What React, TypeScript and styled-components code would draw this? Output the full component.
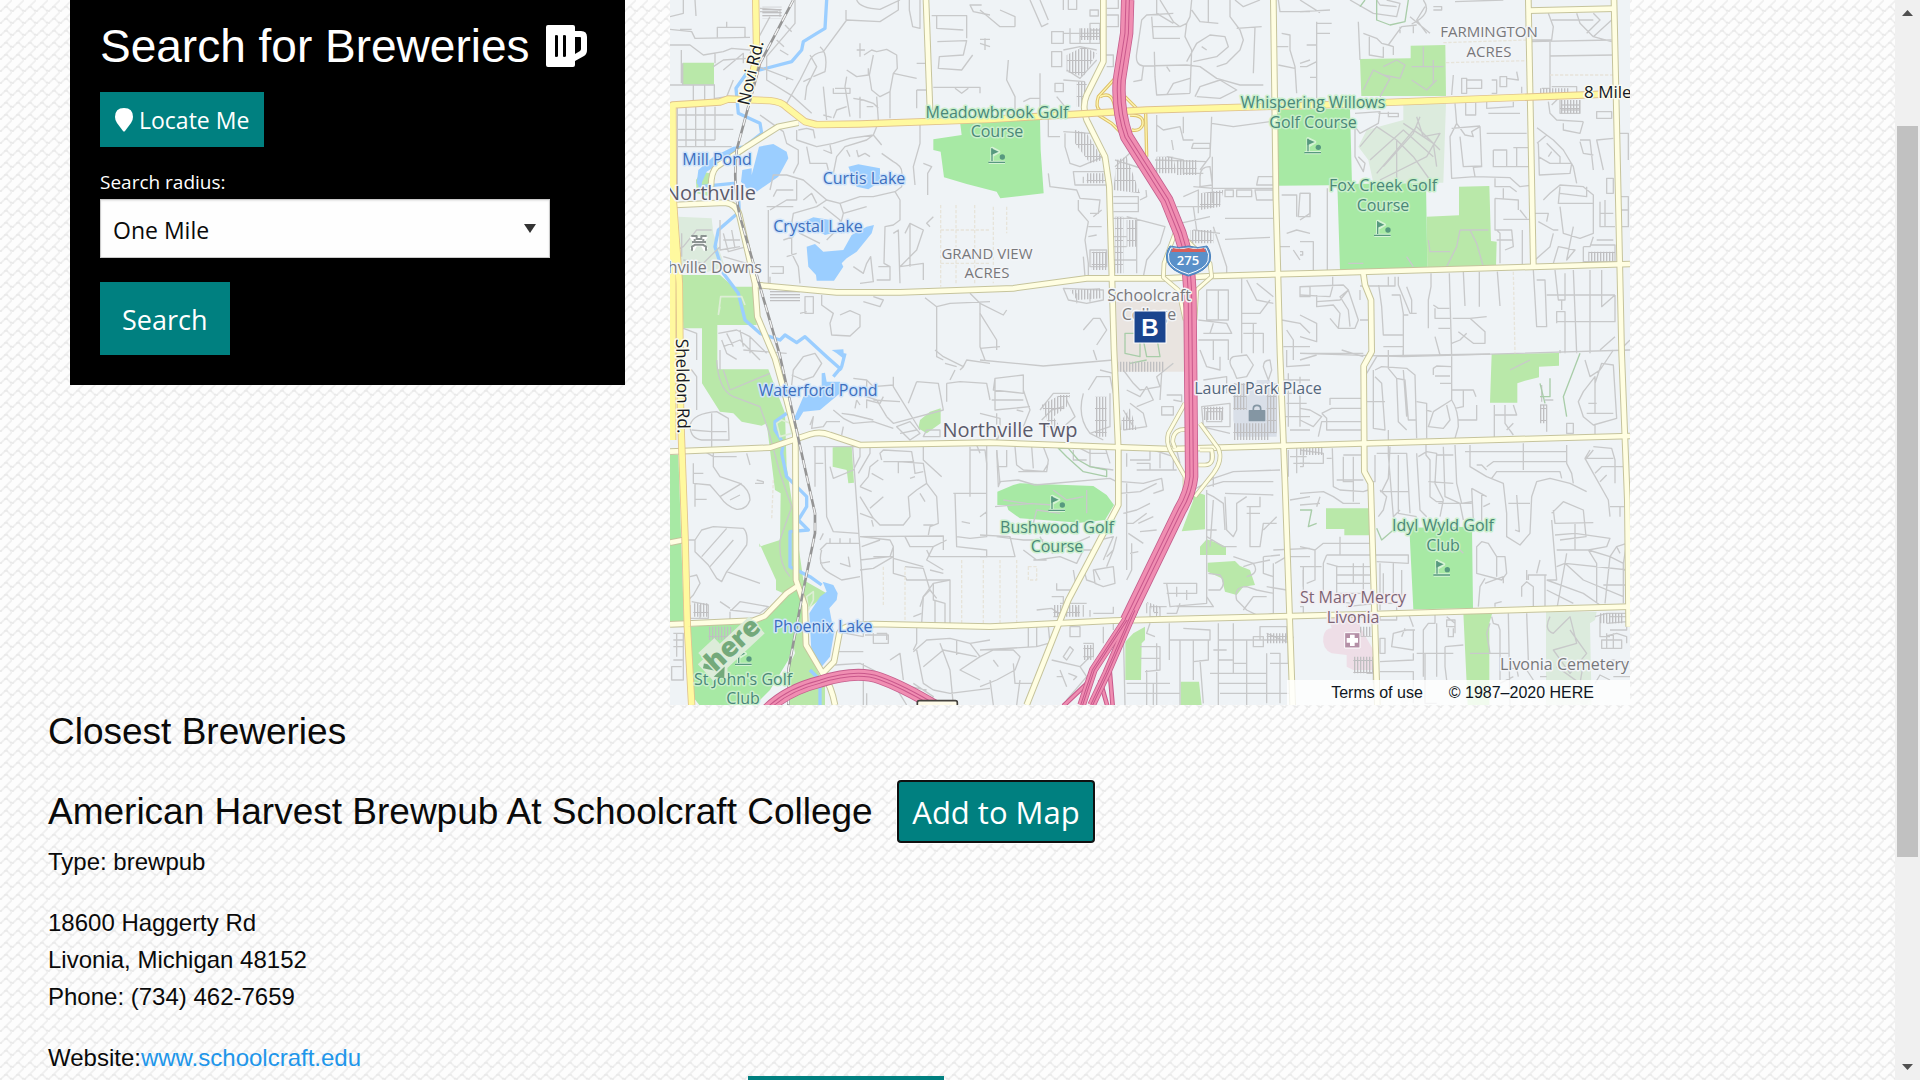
import React from "react";
import styled, { createGlobalStyle, css } from "styled-components";

const weave =
  "url(\"data:image/svg+xml,%3Csvg xmlns='http://www.w3.org/2000/svg' width='12' height='12'%3E%3Crect width='12' height='12' fill='%23fdfdfd'/%3E%3Cpath d='M0 12L12 0M6 6l6 6' stroke='%23efefef' stroke-width='1.6' fill='none'/%3E%3Cpath d='M4 7h4M10 11l2-1M0 11h2' stroke='%23e6e6e6' fill='none'/%3E%3C/svg%3E\")";

const arial = '"Liberation Sans", Arial, sans-serif';
const humanist = '"Open Sans", "Noto Sans", sans-serif';

const GlobalStyle = createGlobalStyle`
  *, *::before, *::after { box-sizing: border-box; }
  body {
    margin: 0;
    background: #fdfdfd ${weave};
    color: #0a0a0a;
    font: 24px/37px ${arial};
    overflow: hidden;
  }
`;

const Shell = styled.div`
  display: grid;
  grid-template-columns: minmax(0, 1fr) 25px;
  height: 100vh;
`;

const Page = styled.main`
  height: 100vh;
  overflow: hidden;
`;

const Top = styled.section`
  display: grid;
  grid-template-columns: 555fr 960fr 220fr;
  gap: 45px;
  align-items: start;
  padding-left: 70px;
`;

const Panel = styled.form`
  display: flex;
  flex-direction: column;
  align-items: flex-start;
  padding: 17px 30px 30px;
  background: #000;
  color: #fff;
`;

const PanelTitle = styled.h1`
  display: flex;
  align-items: center;
  gap: 16px;
  margin: 0 0 17px;
  font-size: 46px;
  line-height: 58px;
  font-weight: 400;
  white-space: nowrap;
`;

const MugSvg = styled.svg`
  flex: none;
  width: 41px;
  height: 42px;
`;

const PinSvg = styled.svg`
  flex: none;
  width: 18px;
  height: 24px;
`;

const Button = styled.button<{ $size: "small" | "medium" | "large"; $focused?: boolean }>`
  display: inline-flex;
  align-items: center;
  justify-content: center;
  gap: 6px;
  flex: none;
  border: 0;
  background: #008080;
  color: #fff;
  font-family: ${humanist};
  white-space: nowrap;
  ${({ $size }) =>
    $size === "small"
      ? css`font-size: 23px; height: 55px; padding: 0 15px;`
      : $size === "medium"
      ? css`font-size: 27px; height: 73px; padding: 2px 22px 0;`
      : css`font-size: 31px; height: 61px; width: 196px; padding: 0;`}
  ${({ $focused }) =>
    $focused &&
    css`
      border: 1px solid #101010;
      border-radius: 3px;
      box-shadow: 0 0 0 1px #101010, 0 0 0 2px #fff;
    `}
`;

const Label = styled.label`
  margin-top: 18px;
  font: 19px/34px ${humanist};
`;

const Select = styled.select`
  appearance: none;
  width: 450px;
  max-width: 100%;
  height: 59px;
  margin-bottom: 24px;
  padding: 2px 12px 0;
  border: 1px solid #cacaca;
  border-radius: 0;
  box-shadow: inset 0 1px 2px rgba(10, 10, 10, 0.1);
  background: #fefefe
    url("data:image/svg+xml,%3Csvg xmlns='http://www.w3.org/2000/svg' width='12' height='9'%3E%3Cpath d='M0 0h12L6 9z' fill='%23333'/%3E%3C/svg%3E")
    no-repeat right 13px center;
  color: #0a0a0a;
  font: 23px ${humanist};
`;

const MapBox = styled.div`
  position: relative;
  overflow: hidden;
  background: #eff3f6;
  aspect-ratio: 960 / 705;
`;

const MapDrawing = styled.svg`
  display: block;
  width: 100%;
  height: 100%;
`;

const MapText = styled.text<{ $anchor: "start" | "middle" | "end" }>`
  font-family: ${humanist};
  text-anchor: ${(p) => p.$anchor};
  paint-order: stroke;
  stroke-width: 3px;
  stroke-linejoin: round;
`;

const Credits = styled.div`
  position: absolute;
  right: 0;
  bottom: 0;
  display: flex;
  gap: 26px;
  padding: 0 36px 0 44px;
  background: rgba(255, 255, 255, 0.8);
  color: #0f1621;
  font-size: 16px;
  line-height: 25px;
`;

const CreditLink = styled.a`
  color: inherit;
  text-decoration: none;
`;

const Results = styled.section`
  padding: 0 48px;
`;

const ResultsTitle = styled.h2`
  margin: 0 0 22px;
  font-size: 37px;
  line-height: 54px;
  font-weight: 400;
`;

const BreweryHead = styled.div`
  display: flex;
  align-items: flex-start;
  gap: 16px;
  min-height: 62px;
`;

const BreweryName = styled.h3<{ $width: number }>`
  flex: 0 0 ${(p) => p.$width}px;
  margin: 0;
  font-size: 37px;
  line-height: 61px;
  font-weight: 400;
  white-space: nowrap;
`;

const Line = styled.p`
  margin: 0;
`;

const Address = styled.address`
  margin: 24px 0;
  font-style: normal;
`;

const SiteLink = styled.a`
  color: #2196ea;
  text-decoration: none;
`;

const Scrollbar = styled.div`
  display: flex;
  flex-direction: column;
  height: 100vh;
  background: #f0f0f0;
`;

const Arrow = styled.svg`
  display: block;
  flex: none;
  width: 25px;
  height: 25px;
`;

const Gap = styled.div<{ $grow: number }>`
  flex: ${(p) => p.$grow} 0 0;
`;

const Thumb = styled.div`
  flex: 731 0 0;
  margin: 0 2px;
  background: #c1c1c1;
`;

type Tone = "golf" | "water" | "town" | "area" | "road" | "mall" | "hospital";
const tones: Record<Tone, [string, string]> = {
  golf: ["#4a8778", "#c9efcb"],
  water: ["#3d6fbe", "#cfe4fa"],
  town: ["#5b5b6b", "#f3f5f8"],
  area: ["#78787b", "#f3f5f8"],
  road: ["#16191f", "#fbfbee"],
  mall: ["#54677c", "#f3f5f8"],
  hospital: ["#7d6474", "#f3eef2"],
};

interface MapLabel {
  t: string;
  x: number;
  y: number;
  tone: Tone;
  size?: number;
  anchor?: "start" | "middle" | "end";
  turn?: number;
}

const labels: MapLabel[] = [
  { t: "FARMINGTON", x: 819, y: 37, tone: "area", size: 15 },
  { t: "ACRES", x: 819, y: 57, tone: "area", size: 15 },
  { t: "8 Mile", x: 914, y: 98, tone: "road", size: 17, anchor: "start" },
  { t: "Meadowbrook Golf", x: 327, y: 118, tone: "golf" },
  { t: "Course", x: 327, y: 137, tone: "golf" },
  { t: "Whispering Willows", x: 643, y: 108, tone: "golf" },
  { t: "Golf Course", x: 643, y: 128, tone: "golf" },
  { t: "Fox Creek Golf", x: 713, y: 191, tone: "golf" },
  { t: "Course", x: 713, y: 211, tone: "golf" },
  { t: "Mill Pond", x: 47, y: 165, tone: "water" },
  { t: "Curtis Lake", x: 194, y: 184, tone: "water" },
  { t: "Crystal Lake", x: 148, y: 232, tone: "water" },
  { t: "Northville", x: 86, y: 200, tone: "town", size: 20, anchor: "end" },
  { t: "hville Downs", x: 92, y: 273, tone: "area", anchor: "end" },
  { t: "GRAND VIEW", x: 317, y: 259, tone: "area", size: 15 },
  { t: "ACRES", x: 317, y: 278, tone: "area", size: 15 },
  { t: "Schoolcraft", x: 479, y: 301, tone: "area" },
  { t: "College", x: 479, y: 320, tone: "area" },
  { t: "Laurel Park Place", x: 588, y: 394, tone: "mall" },
  { t: "Waterford Pond", x: 148, y: 396, tone: "water" },
  { t: "Northville Twp", x: 340, y: 437, tone: "town", size: 20 },
  { t: "Bushwood Golf", x: 387, y: 533, tone: "golf" },
  { t: "Course", x: 387, y: 552, tone: "golf" },
  { t: "Idyl Wyld Golf", x: 773, y: 531, tone: "golf" },
  { t: "Club", x: 773, y: 551, tone: "golf" },
  { t: "St Mary Mercy", x: 683, y: 603, tone: "hospital" },
  { t: "Livonia", x: 683, y: 623, tone: "hospital" },
  { t: "Livonia Cemetery", x: 959, y: 670, tone: "area", anchor: "end" },
  { t: "Phoenix Lake", x: 153, y: 632, tone: "water" },
  { t: "St John's Golf", x: 73, y: 685, tone: "golf" },
  { t: "Club", x: 73, y: 704, tone: "golf" },
  { t: "Sheldon Rd.", x: 6, y: 339, tone: "road", size: 17, anchor: "start", turn: 89 },
  { t: "Novi Rd.", x: 79, y: 106, tone: "road", size: 17, anchor: "start", turn: -77 },
];

/* Street and area outlines are kept in map units, three to a pixel. */
const yellowRoads = [
  "M8 1320V315L150 306L175 297L300 302Q335 305 350 322L405 365L440 374L570 372L960 358L1430 330L1920 316L2740 285L2880 279",
  "M8 315L10 600L28 850L32 1250L45 1610L52 1880L65 2115",
  "M257 0L260 170L228 300",
];

const creamRoads = [
  "M385 368L325 380L230 440L140 500Q123 515 123 560",
  "M15 615L165 608Q198 612 208 645L255 850L262 950L315 1075L350 1200L376 1300L378 1740L404 1815L408 1935L458 2020Q485 2060 495 2115",
  "M260 855L500 877L690 877L1030 865L1250 835L1490 835L1630 828L1920 820L2880 792",
  "M768 0L780 330",
  "M1300 0V185L1250 285Q1235 320 1250 360L1305 470L1318 560L1332 1050L1345 1350V1515L1195 1800L1070 2115",
  "M1810 0L1818 600L1830 1060L1845 1450L1868 2115",
  "M2575 0L2590 800",
  "M2832 0L2855 1060L2872 1500L2876 1880",
  "M2575 32L2832 26",
  "M2080 820L2085 855L2103 900L2105 1055L2081 1098L2083 1415L2102 1450L2122 2115",
  "M0 1355L300 1343L420 1303Q450 1293 480 1305L570 1335L960 1328L1500 1347L1920 1335L2880 1308",
  "M0 1873L250 1862L285 1848L350 1780L380 1760",
  "M458 2020L492 1985L508 1900Q515 1878 560 1875L610 1872L960 1880L1330 1862L2110 1842L2880 1820",
  "M0 1628L40 1620",
];

const creamRamps = [
  "M1545 1210L1495 1300Q1488 1325 1500 1350L1545 1430V1470",
  "M1560 1290Q1510 1280 1508 1325L1515 1345",
  "M1590 1270L1645 1345Q1660 1380 1630 1420L1575 1490",
  "M1590 1350H1625Q1635 1395 1605 1395H1585",
  "M1515 700L1482 790L1480 832L1525 870L1545 960",
  "M1550 720L1620 790L1625 830L1580 870L1575 960",
];

const yellowRamps = [
  "M1335 235L1285 290Q1275 320 1290 332",
  "M1290 290Q1330 270 1335 330",
  "M1365 290L1400 325",
  "M1285 345L1325 370L1355 400",
  "M1380 345Q1425 345 1418 375Q1410 395 1385 390",
  "M1427 340L1430 470",
];

const highways: [string, number][] = [
  ["M1373 0L1370 100L1348 240Q1342 330 1370 410L1490 600L1530 700Q1560 790 1560 900L1565 1430Q1560 1480 1530 1530L1370 1860", 40],
  ["M1378 1845L1270 2010L1235 2115", 26],
  ["M1392 1830L1310 2020L1265 2115", 26],
  ["M290 2130Q350 2070 450 2045Q560 2010 630 2035Q700 2060 800 2120", 36],
];
const slipRoads = "M1262 2040L1180 2118M1318 2000L1328 2118M1290 2040L1312 2118";

const rail = "M370 0L270 190L200 450Q188 560 210 650L270 860L328 1060L435 1540V1600L400 1770L355 2010V2115";

const streets: [number, number, ...string[]][] = [
  [-30, 0,
    "M30 50L70 40V0M105 0L108 48M30 88L95 95L105 115L270 112M172 112V82H255V112M95 88H60M200 82V65M30 135H90L130 165L190 155L215 145L270 150M64 150V250M165 190V160M68 190V255M30 255H165M100 255V310M134 255V310M163 255V310M165 295L200 290L220 240M52 320V580M78 320V440M107 320V440M135 320V440M165 320V420M52 345H220M52 388H220M52 420H165M52 440H215M160 200L190 180L260 175M190 210L250 160V190M270 160L330 50M300 25L360 30V50M300 35H355M405 0V70L320 170V240L400 290L455 340M350 120L372 140M375 75L395 95M360 150L385 165",
    "M380 310L420 240L450 180Q460 160 490 155L560 60L660 65L715 30V0M590 0Q600 25 660 28L720 0M558 60V30M450 165L470 200L440 260L435 300M480 140Q505 160 495 215L460 230M295 200L400 240M380 240V230M430 245L450 235M490 260L500 360M560 210L590 230L625 225V205M560 230L555 260L570 350M525 265H570V280H520V265M600 130V170M590 150H615M612 165L635 150L650 155L680 148L710 165L712 205L700 220L690 275L660 290L635 270L628 225L640 165M700 220L770 235M770 190H800M580 295L610 300L640 310L655 325M600 290V355M650 290L655 360M690 275V355M520 355L530 330L560 320M490 345L515 352M640 320H620M748 0V30L758 80L780 85V0M815 47H920V115M830 47V85L910 90M832 125L920 122L910 165L838 170L835 205L905 210L938 165M965 15H930L940 35L990 45M960 130L990 140M820 262H960V280M885 265L905 280L925 265M770 270H800M770 270V325",
    "M300 345L370 395L380 430L415 450V490L400 520M410 390V420L470 440L520 430L570 415L640 405L650 380M415 390L440 385L460 390L465 415M440 440L450 490L500 490L505 510M490 450L515 460L510 435M520 520L530 470L555 440L620 420L640 405L665 435M560 450L570 470M590 450L595 470L615 460L630 470M665 460L700 485Q730 500 725 525V560L705 575L640 590H600L540 610L500 600L430 540L380 525H340L330 570M430 600L455 580L470 610M500 600L470 620L400 640L395 670L420 700L480 730M705 575L720 600V660L700 675L675 680L672 790L690 800V840M780 370V430L760 500L765 555M790 490L815 500L803 520V585M320 620H400M330 630L380 600L410 600V540M340 590L350 570L400 570M325 630V850M540 610L550 640L620 620M550 640L540 680L500 720M490 620L540 660L545 700M580 800L610 820L620 790L632 770L640 845L600 850M655 800H690V840H650M700 700L715 690L720 850M735 700L750 670L790 690L770 750L720 800M750 670V800M720 800L790 790V840M820 650L800 670L810 680",
    "M180 660V750L240 740M190 700L205 755L260 740M215 690L225 745M190 770L260 790M190 720H240M395 690V760L415 800L420 850M370 720L400 710M380 770L410 760M30 760L70 740L110 690H155M65 700V770M70 780L130 790L180 740M330 830V870M330 800H370V820H335M485 885V915L520 940L510 970L515 1005L570 1008L600 980V945L570 932L540 945M435 890H460V940H435ZM420 940L440 935M640 890L670 900L660 920L610 905M795 893L830 920L870 910L990 905M830 920V1070L850 1080M960 910V1040L975 1080M930 880L960 910M175 1000L230 990L270 1010L320 1060M190 1040L240 1020L300 1080M185 1020L200 1060L230 1078M200 1000L220 1040M240 990L250 1040M270 1010V1060M70 985L110 1000V1080M45 1000L40 1060"],
  [930, 0,
    "M0 30L60 80H105M60 30L105 50V80M15 115V150M0 118H30M150 0L185 80L205 70M180 0L205 60M85 180L80 240L105 290V330M180 220V340M130 305L150 295H180M250 0V30M265 0V28H290V0M330 30H355V48H330ZM380 25H415V0M380 45H415V80H380M330 70H360V90H330ZM215 95H250V130H215ZM215 155H245V200H215ZM250 100H360M270 85V130H360V100M300 85V130M330 85V130M250 150L300 140L350 150M260 210L300 235L350 180M375 165H400V200H380M250 240L315 245M225 250H250V275H225ZM230 290L255 320M205 350V410H240M250 395L330 400M255 400V440L270 490L300 500L370 470M205 520L210 560L290 570L300 595L360 600L355 640L330 640M295 600V630L325 665L315 720L325 790V840M325 680H365M325 710L350 705M315 830L310 770M365 630L340 650",
    "M580 40L500 45L485 60L470 160Q465 195 490 198L620 195L660 200L710 235L780 255H850M530 0V40L580 70M540 0L580 65L600 80M515 50L520 115H600M515 80H600L620 70M635 0L630 50L620 70L615 110L635 150L630 280M635 30L660 65L715 70M685 0V65M765 0L790 20L840 0M750 0V50L780 90L790 120L780 150L740 190L710 200M770 85L845 80M825 80L820 220M620 185L650 130L690 105L735 110L745 140L710 170L640 185M665 140L680 150M523 155L525 230L530 285L630 280M560 285L580 250L630 235M645 290L660 260L720 240L770 270L720 295L650 290M490 200L485 240L460 245M560 200L570 215",
    "M895 0L900 35H990M905 100L930 105V150L945 200L950 280M890 140H925M895 195L945 205M990 180L960 190M530 345V455M530 375L550 390L600 380L610 420H640M575 420L580 450M610 350V400M695 350L690 470L660 510M695 370L760 380L870 365M640 430H690V445H635ZM697 470V610M405 480L500 510M405 500L460 450L500 530M525 480L680 485M560 470L610 480V520H670M660 530Q660 500 690 500L697 555L660 560ZM835 530H880V555H830ZM640 560L700 565H880M735 570H760V590H735ZM770 570H815V590H770ZM825 570H880V600H830ZM280 515H380V555H285ZM310 530V550M400 590H475V635H400M400 610H475M610 590L655 570V640M590 620H700M600 670L690 650M640 620L650 690M735 655H880M735 718L870 712M640 690L720 700M700 680L740 800V825M480 600L500 590L498 570M440 650L555 680L540 730L500 780L490 830M400 655H470V820M330 750H380V800H330ZM400 710H440M400 740H440M400 780H470",
    "M905 585H950V650M960 580H990V650H955ZM920 700L950 690L990 700M900 740H930M940 750L960 780M0 910L70 945L80 930M0 940L50 1020V1050M0 1045L60 1040M250 865L370 870V900L320 910L265 900ZM290 880V910M330 880V905M310 990L340 955L360 955L380 990L350 1035M680 870H745V960H680ZM715 870V960M655 960L740 970L755 1000L670 1000M700 970L690 1000M655 1020H745V1080M700 1020V1080M785 835V1060M785 970L830 970M800 840L830 900L880 910M830 850L880 890M960 860H990V890H960ZM905 960L960 970L990 1000M790 1000H850V1060M820 970V1060M910 1040H990M920 990L940 1020V1080M785 940H840L870 900"],
  [1890, 0,
    "M0 35L90 30M0 0L60 38M50 65V295M50 70H95M50 100H90M20 135H50M0 200H20L50 185M30 232H50M150 0L220 40L290 50L300 10L260 0M230 0L240 15L290 20M175 65L180 180M190 100L230 115L245 130L265 135L305 80L350 75M208 110V165L250 172V140M265 135L280 140V165M330 50L390 100M300 80V100M340 75V100M375 20L350 60L380 100M370 0Q400 40 335 72M400 20H425V30H400M465 5L610 0M745 40L760 80L755 120H695M750 120V265M690 125L935 120M748 168L940 165M755 60H880M830 40L840 70L880 110L935 60M880 40L900 60L860 100M880 110L935 125M460 225L455 285M485 235H500V280H485ZM500 240H545V265H500ZM575 240H590V280H575M600 230H620V260H600ZM650 215L655 240L620 235M665 260V280M725 265H750V280M755 260H830V290",
    "M465 310L470 370L450 410L455 535L525 530L630 533L660 560L700 555M470 370L495 405L520 410L515 395L540 380L545 500L520 502L525 530M455 385L540 378M480 410L490 500L545 498M497 308V345H527V308M560 305V325L640 320V305M565 340H660M560 400H680M580 450H620V500M580 450V500H690M650 445V500M640 443H685M711 383L760 420L790 450L820 500L830 550M711 430L740 405M740 430L780 470V490M715 430L718 525L810 520L815 490H750L715 470M745 470L755 455M165 340L240 335L235 370L180 400L165 380V470L190 515L195 490L175 470M235 340H295V350H265V335M745 305L750 340L770 360L850 365M790 370V390L840 400L850 365M755 315L780 290M780 300V340H840V300M785 315H840M785 330H840M890 335H935V355H890ZM840 420H870L880 510M940 415L890 420L910 510M840 425L850 460L880 465M960 400H985V480",
    "M585 535V560H630L650 575M610 565V595M585 595L655 600V630M585 595V690L635 690L640 740L615 750M610 658H690M660 630L680 655M590 690L600 700V790M667 690V800M640 720H590M700 640H745L740 665M715 665L760 690H775M780 560L775 610H880M780 580L860 590V560M730 600L750 580L780 555L850 560L880 585V700L840 715L790 700L780 620M705 780L750 740L760 700M760 790L775 740L825 750L800 780L820 680M850 740H870L880 710M920 535H940V580H920ZM900 605V680H945M900 640H940M915 600V680M890 720H940M870 735H945V785H850V740M960 590H985V680H960M985 630H960M0 580H30V640L0 660M82 565V810M0 725H40V820M0 755H8V765H0",
    "M0 885L90 890L98 860V830M0 860L130 855L145 870L120 900L50 905V885M50 905V920L100 915L120 940L115 985L90 955M145 870L175 960L165 985H140L115 985M145 870L120 890L145 930L150 980M180 870V900M180 858H285V830M180 960H215M265 830V860M236 855L245 920L250 1005H310M250 1040H310M275 885H300L310 940V1065M295 830V855L330 940H350M320 860L335 900V940M310 945H325M393 820V860L385 900L385 985M448 820L455 1070M400 915L415 925H448M405 925V955H450M415 985H450M405 1010L420 1065M458 955H510L560 950M510 955L555 995V1030H520L475 995M455 1030L480 1020L500 1000M490 815L495 918M538 815V920M592 815L600 918M0 945L50 970V1025L0 1010M0 1060L310 1070L990 1050M700 810L710 980H740L735 840H710M740 885H765M765 810L775 900H795V820M785 900V930M770 970V935H795V1060M765 885H945M820 810L830 1060M870 810V1060M905 810V920L945 885M945 885V965H770M945 1010L900 1050M990 1020L960 1050"],
  [-30, 1050,
    "M40 25H60M45 55L95 60L110 80V180M40 65L35 140L45 180M90 225Q100 190 170 185L205 205L207 270H125Q90 265 90 225M155 190V300M95 240L155 245H200M180 0V60M250 0L380 10M395 105L400 60L430 20L465 10L485 40L460 80L430 90L395 75M450 225L460 200L455 235L490 230L500 215L540 215M520 180L550 205L580 220L640 215L700 235M545 190L580 195L640 210M590 150L585 175M620 175V150L660 160L670 140M545 255L550 230M95 310L135 305L160 320H230M160 300V350L180 380L240 400Q270 420 270 450Q260 480 230 478Q200 470 180 440L150 405L100 400V340M100 370H130M105 400V470M105 448H140M180 440L245 400M210 450L240 435M260 310L270 345M290 390L310 395V400H285M85 570H105L125 540L160 530L250 535Q265 550 260 585L235 620L200 665L185 695L170 685L145 645L105 605V570M125 620L200 535M150 650L220 570M200 665L300 700M90 680L110 675L120 700L100 735L85 750M95 755L145 765V805H90V765M120 765V805M210 785V810M215 780L240 755L325 770L300 790L210 780M180 755L210 775",
    "M460 290H600V320L580 360L520 385L510 350M465 290V340H490M495 290L500 500L520 545L595 550M578 290L610 740V860M465 340V410M630 290V310L595 370M665 330L660 310L670 300L755 305L760 335H670M625 380L630 350L655 330M625 380L600 410M635 370L670 390M715 335V370M715 335L790 340L800 400L770 420L745 440L750 500L730 525H660L640 505L600 440M635 425L600 410M630 475L670 440M600 490L640 505M790 290V330L845 380M760 330L765 370L790 365M800 400L830 440L835 520L810 530L805 555M780 430L795 455M765 380L750 385M790 525L820 525M600 560L850 558V600M600 560L690 570L700 590L690 620L600 630M635 510L640 530M605 590L660 570M600 660L640 655L700 620M700 620H640M735 560L750 590L820 590L860 570M700 590V670L735 680L740 690H870V820M810 660L850 670M790 650L700 625M735 650L790 655L810 720L790 740L785 820M820 590L800 630L850 660M820 700V750L855 760V820",
    "M480 570L490 550M510 580V565M540 580V565M570 580V565M480 600L500 580L600 580M485 600Q470 650 510 670L545 690L600 680M480 640L510 635M565 620L570 650L540 640M870 690L820 700L790 740L780 770M760 800L785 790M810 720L830 745M825 750V820M885 430L890 590L980 600V620H810L800 600M880 430L930 430L980 430V560L930 565L890 560M930 290V440M930 300L975 300L980 340V430M905 515L930 520M960 500L980 485M950 285L960 310M860 100L900 95L980 100L990 150M770 95L835 100L850 180L700 220L680 200M700 80V110L780 240M580 85L620 90L640 110L700 105M620 90V140L650 150L680 200M590 150L600 165M640 150L720 155M745 160L770 95M860 100V155M885 60L870 90M710 230L750 215L780 250L750 270ZM790 260H840V240H800ZM720 250L770 240M825 0L850 20L910 50L900 60M910 50L920 30L990 40M855 40L890 50",
    "M530 845L610 860M530 905H610M525 945L600 940L640 960L700 1000L800 1020M610 940V1065M615 855H685V880H640V850M650 850H680V870M770 825V880L760 900M760 905L800 870L870 865L930 880L990 870M770 900L790 1000L820 1020M790 950L850 900L950 920M820 1020L870 1030L990 1015M840 880L870 960L880 1065M890 870V915M930 880L960 920L900 960L960 990M760 1000L820 1040L800 1065M690 930L720 910L730 990M620 1030V1065M700 1000L740 1065M35 830H80M40 850H70V990H35V950H65M40 870H70M40 890H70M40 930H70M50 850V920"],
  [930, 1050,
    "M0 30L190 48L400 30M340 0L350 30M45 85L130 75V130L40 120ZM35 150H130M45 85V180L150 170M50 190V270M0 190L60 205V230M20 220L60 250L50 275M130 120L150 180L130 230M130 185L110 180M180 180L220 130H270M185 210L215 180L250 170M260 150L285 200L240 240L190 225M325 120L350 80H390L400 130M310 130Q290 200 330 250L370 270M330 250L390 230V130M360 60L400 70M430 60L460 100L480 120L540 110L530 80L580 40M440 120L480 140L500 110L520 150L470 170M430 180L460 230M450 160L490 190L500 230L430 240M540 150L545 70M545 170H580V195H545ZM560 135H605V155L580 150M680 185H725V215H680ZM665 170L750 160V230H670ZM665 230L750 250M760 60Q740 30 760 20L800 15L820 45L800 80L770 85ZM850 50Q850 30 870 30L875 60L865 90ZM660 0L680 50L720 60V20M670 90L740 80V130M920 0V50L990 45M910 90H990M925 70V230M920 130H980M920 160H980M910 200H990M960 80V230M930 240H990M925 300V380M930 320H980M940 340H990M950 290V370M970 300V350",
    "M20 285V360M50 300L55 410L60 395L115 390L165 405L390 385L410 395M80 300V350H50M105 290L110 345L130 360L200 365L205 330L190 290M155 290L160 355M115 365H190L205 340M280 300V330H320M290 290L330 310H380M330 290V350L400 360M375 290L390 340M440 310V350M460 300H510V330H450M470 340H510V360M520 300L580 320V360H520M540 310V355M470 360L590 360M590 300L600 340M660 300H690V340M640 420L700 385L760 365L900 360M680 410L730 395L880 395M700 380V410M680 430L700 440L730 460L735 540M735 430L880 435M735 440L740 540L760 560L770 540V460L800 440M700 450L690 590M680 540H710M680 560L730 590H770M800 470H840V440M810 470V590H840L850 520H890M800 490H840M850 540L890 500M880 600L990 595M850 620V670L880 680M850 620L900 615M760 620L820 640L870 630M885 640L920 620H990M970 660V710M930 450L990 440",
    "M425 395L490 400L545 385L550 420L520 430M420 430L480 425L530 400M430 490L470 480L510 460M440 400V660M440 520L460 520L500 490M445 550L490 580M450 610L475 605M440 690L455 660V580M475 520L520 500M480 545L530 540M410 560L400 600L380 620M50 300L60 400M45 470L160 460M160 520L170 480L240 490M320 420V490M50 560L130 570L190 570M0 555L90 560L105 620H0M130 600L170 630L240 620L290 640L310 600L340 600M180 560L200 600M160 630L200 630M215 610L330 560M360 570L400 560L370 630M340 660L400 650L405 700L370 710L345 700ZM230 700V720H270M280 660L290 720M310 655L320 690L350 700M215 740H250V800H220M240 760H320M290 770V800M310 765V800M330 780V800M340 790H400V770M170 780L215 775L250 800M360 690L345 660M400 600L380 650",
    "M560 700L570 770L680 760V420M550 700H650V730H560M590 710V740M620 720V750M560 770H540M590 770H700L680 740M685 670L720 675Q740 700 720 720H685M770 750Q760 710 800 710L830 720L880 730V790L840 800L800 780L770 750M790 650L820 640Q840 670 800 680M880 640V790M860 710L920 720M790 780L820 740L860 740M600 760L590 790H560M500 760V790M510 770H540V800H510Z",
    "M205 830L210 880M145 830V890M170 830V890M205 880L170 890L0 900M0 920L40 900L100 900L120 920L105 960L50 990L0 1010M40 930L55 950M30 990L40 1065M100 940L105 1000H160M120 990L110 1065M250 920L270 890L280 900L260 930ZM215 930L300 950L320 980L260 1050M230 980H250M240 960L260 1010M265 970L290 980L280 990M310 880H340V920H310M300 950L330 920M270 830H300V860H270ZM370 830V880M400 820V840M510 820L500 850L525 860M480 890H540V960L495 965M480 925H540M440 1000H570M440 1030H600M500 960V1065M520 1000V1065M430 840L435 1065M568 820V930M530 880V1065M570 870H690V840L610 835M600 870V1065M640 870V990M685 870V930L640 935M715 820V1065M690 970H860M760 820V970M800 870V1065M715 870H870M840 830H920V870H840ZM820 860H850V890H820ZM860 850L930 880L940 860M870 910H900V970M715 1000H860M860 910V1060M660 930L670 1060M720 1030H940M900 970V1060M925 870V940H870M740 900H700M760 940H800M715 930H760"],
  [1890, 1050,
    "M0 10H190M125 0L190 20M0 30L50 15M230 20L200 70M230 18L570 12M265 0V55L290 85L295 215L320 240M310 0V20M225 60L245 50L320 55L345 75L350 265M220 60V235L255 240L245 100L225 80M290 85L315 90L325 210H350M310 60L320 200M255 155H200M265 240V270M455 20V150Q475 180 475 230L465 265M400 75V55L410 48L455 50M405 78H450M420 100H455M455 120H520L528 140M490 120V170L465 175M530 165V210H475M455 150L400 185L385 230L430 235L450 210L440 165M378 180L395 185M350 155L380 160V265M90 165V145H190M65 190L95 175H190M65 190L80 205V240H190M0 175L30 180L65 200L40 230L0 210M55 260L65 215H190M583 165V265M583 195H650L640 165M615 165V220L640 255M620 240L640 220M690 30L630 60M780 10V0M855 30L870 80L900 60L940 0M885 100L905 40L940 45L950 205L880 225L850 200L835 155L850 125L885 80V190M865 160H890M860 190H940M885 225V255M720 165H740V245M725 105V155M735 150H760M800 220H820V250H800Z",
    "M97 295L100 410L120 420L190 425L205 420M130 315H190M130 320V395H160V320M110 390H190M95 325H80M0 300L70 310V340L0 340M0 350H10M160 350V430M160 430V455M0 430L70 425L100 440L130 460L180 460M60 440L50 470M0 465L60 460M225 315V395H205M265 285V315L280 500L300 480M230 310H320L330 490M245 425L265 385L270 290M240 425H325M295 315V490L350 500M378 285V315L390 330V440L410 455H430M350 310L360 480L380 500M355 320L380 305L410 310L405 400L430 450L420 500M430 290L435 440L480 460L490 510M465 285L470 400L485 460L515 455M410 315H460M385 395L460 400M415 460H515M235 500L250 480L260 440L240 420M510 285V350L560 380L610 400L620 490V560L660 585L690 550L695 440L710 395L750 385L810 400L860 425M495 305H800M670 280V360M530 345H545L560 360M560 350L580 335H800M575 385L590 365H780L785 385M820 400L815 370L800 340V285M650 435L658 545L645 540M625 460H690M515 415L560 440M545 430V520M515 415L520 510M550 470L570 460M880 290L935 295L945 330V400M860 325H940M870 300L855 325L880 370L925 450L930 500M855 330L880 300M885 370L905 350H970M900 395L920 375M930 470H975M960 470V500",
    "M755 490L790 455L850 480L858 560L780 570M760 480L765 520L880 518M755 510L770 690L740 690M765 555L825 550L930 565L920 590L865 600H770M825 520V600M865 600L930 620L970 640L980 580L950 590L930 620M950 590L960 610M865 600L890 640V760M930 620L915 760M800 610L795 640L850 690L970 740M770 650L795 640L985 660M795 640L770 780M740 690L850 730L900 765M740 720L820 760M970 640V760M910 705H980M720 630L710 670M680 660V690M740 675H685V690M665 740V710L680 695L700 710V770M735 675V770M530 590L545 575L565 580L590 620H615L620 670L605 690L530 670ZM590 620V680M555 685L540 710L535 770M555 700L610 680V700M585 770V760L605 755M480 600L490 610M0 590L45 600L70 580H210M120 560V615M80 615H325V640L230 635M80 615L70 640V730M45 600V690L20 700M0 650H65M10 650V720M80 640L115 650H210M110 650V730H190M110 675H210M110 700H210M160 640V700M190 640V730M240 640V780M280 640V740M305 660V770M250 670V760H290M110 755L160 760M140 770L230 760",
    "M0 770H10V790M240 790V810H290V770M345 840L320 840L280 850L275 890L340 900V840M305 860L315 835M340 830L325 790M240 865H255V910H240ZM240 935L340 930V910M240 965H340V1060M375 910V1060L410 1060M405 790V820H385L370 840V980M440 800L465 820V850M440 810V830H465V810ZM445 835V860H460V835M435 890L490 885M435 890V950L440 990M410 820V980M350 910H460M510 910H625M575 800L580 820L595 825L600 840V990M625 790L630 1065M680 790L685 930M570 820L560 850L570 910M605 955H650L655 980M600 1000L640 980M700 990L680 960M720 980H740M885 800L920 790L985 790M900 800V860H930M930 800H980V840H930M920 820L980 815M910 860L950 850L980 860V880M905 870H965V895H905ZM920 850V895M940 850V895M900 940L940 930L990 940M885 1000L900 975L930 990M940 980H990M200 970H220V1000"],
];

const hatches: [string, string][] = [
  ["M277 20H335V55H277ZM300 870H390V905H300Z", "h"],
  ["M1230 85H1290V120H1230ZM1190 165L1240 140L1280 160L1240 230L1190 215ZM1220 245H1250V320H1220ZM1215 390L1250 400L1300 480L1260 490L1215 430ZM1250 520H1305V550H1250ZM1340 480L1370 470L1410 580L1330 570ZM1460 470L1510 470L1520 520L1455 520ZM1520 480H1580V525H1520ZM1335 650H1360V820H1335ZM1370 660H1400V740H1370ZM1265 755H1310V810H1265ZM1590 580L1660 570L1650 620L1590 630ZM1560 690H1630V730H1560ZM1200 870L1290 865L1295 895L1220 900Z", "v"],
  ["M1115 1215L1170 1185H1200L1190 1220L1150 1250L1170 1280L1140 1285ZM1275 1190H1310V1310H1275ZM1355 1260L1380 1225L1400 1290H1350ZM1600 1220H1660V1260H1600ZM1690 1270H1800V1320H1690ZM1690 1150H1730V1230H1690ZM1790 1150H1820V1300H1790ZM1150 1815H1230V1850H1150ZM1430 1805L1470 1820L1460 1850ZM1240 1935H1270V1980H1240ZM1345 1085H1485V1115H1345Z", "v"],
  ["M2670 300H2730V340H2670ZM2755 755H2835V785H2755ZM2610 265H2700V280H2610ZM2610 1215H2630V1270H2610ZM1890 1340H1960V1365H1890ZM2050 1970H2110V2020H2050ZM2070 1880H2105V1910H2070ZM2790 1840H2860V1870H2790ZM1790 1900H1850V1930H1790ZM115 1880H190V1920H115ZM70 1810H115V1850H70Z", "v"],
];

const flags: [number, number][] = [
  [980, 445], [1928, 416], [2137, 664], [1160, 1489], [2315, 1683], [220, 1951],
];

const MapPicture = () => (
  <MapDrawing viewBox="0 0 960 705" role="img" aria-label="Street map of Livonia and Northville">
    <defs>
      <pattern id="v" width="9" height="36" patternUnits="userSpaceOnUse">
        <path d="M2 0V36M0 1H9" stroke="#bfbfc1" strokeWidth="4" />
      </pattern>
      <pattern id="h" width="36" height="9" patternUnits="userSpaceOnUse">
        <path d="M0 2H36" stroke="#bfbfc1" strokeWidth="4" />
      </pattern>
    </defs>
    <g transform="scale(0.333333)" fill="none" strokeLinejoin="round">
      <path fill="#dcebdd" d="M25 650L125 655L130 700L165 800L100 820L35 810ZM2200 310H2328L2320 548H2110L2095 480L2065 440L2090 390L2200 360ZM2628 1835H2780L2775 1860L2760 1870L2765 2115H2628Z" />
      <path fill="#e9e4e0" d="M1338 905H1545V1115H1342Z" />
      <path fill="#d9dfe8" d="M1690 1150H1820V1310H1700L1690 1260ZM1760 1140H1800V1180H1760Z" />
      <path fill="#eedee7" d="M1975 1850H2070V1880L2110 1950V2010H2050L2030 2000V1965L1985 1960Q1955 1945 1960 1910Q1965 1885 1985 1885Z" />
      <path fill="#b9e8a9" d="M38 188H132V254H38ZM78 540L95 515L120 520L125 590L80 580ZM35 825H150L190 860H255L260 975H142V1108H295L345 1240L350 1400L380 1600L400 1740L470 1780L400 1840L418 1960L465 2060V2115H360L355 2000L375 1960L340 1780L318 1770V1740L268 1630V1640L330 1620L332 1480L315 1470L290 1270L275 1277L215 1265L190 1240L150 1235L96 1150V985H40ZM488 1342L545 1338L552 1448L535 1450L530 1410L488 1400ZM750 1260L780 1235L812 1225V1270L770 1300L745 1285ZM2070 177L2222 175V137L2326 135L2328 288H2074ZM2270 650L2367 646V560L2458 558L2463 723L2480 725L2478 800L2272 803ZM2465 1062L2667 1059V1097L2607 1100V1132L2565 1142L2542 1150V1208H2460ZM1968 1525H2097V1606H2023V1587H1968ZM1545 1480L1585 1478L1605 1485V1588L1535 1594L1570 1500ZM1590 1665V1640L1610 1618L1645 1630L1668 1640V1665ZM1613 1688L1695 1683L1710 1698L1740 1710L1755 1755L1720 1760L1700 1785L1665 1775L1655 1735L1613 1715ZM1366 2040V1925L1390 1900L1425 1880V1920L1415 1930L1413 2040ZM1532 2045H1587L1595 2115H1532ZM2380 1838H2467L2458 1870V2115H2393Z" />
      <path fill="#a7e9a4" d="M870 365L1110 358L1112 450L1121 580L991 595L980 575L890 552L822 532L812 455L790 450V418L875 405ZM1815 330L2040 325L2046 555L1823 557ZM2002 552L2268 550L2272 808L2010 810ZM982 1475L1030 1455L1050 1450L1270 1458L1310 1485L1332 1515L1305 1560L1230 1568L1050 1555L1015 1530L1010 1515L982 1515ZM2218 1583L2406 1580L2409 1825L2230 1828ZM0 1365H25L42 1870H0ZM62 1880L270 1862L380 1765L400 1830L355 1980L300 2070L240 2130H100L72 2095Z" />
      <path fill="#9bceff" d="M267 440L310 432L350 455L355 475L325 530L260 575L230 565L213 545L217 510L245 505L245 525ZM535 500L565 493L630 505V545L595 568L560 560ZM400 665L430 652L480 660L485 700L465 705ZM410 740L435 732L460 755L520 750L545 705L590 680L612 675L605 700L560 755L530 775L515 790L520 800L492 842H440L438 825L415 800ZM85 510L130 470L190 440L230 435L180 470L110 515L90 560L80 550ZM370 1260L400 1190L455 1170V1120L465 1118L470 1145L510 1145L510 1180L450 1230L400 1235L385 1260ZM458 1745L490 1755L503 1780L500 1800L478 1825L492 1900L480 1970L455 2000L425 1970L418 1840L450 1790L470 1775ZM485 1050L520 1048L523 1078L500 1060Z" />
      <g stroke="#9bceff" strokeWidth="10">
        <path d="M470 0L465 85L440 100L400 125L395 150L365 185L230 220L198 265L205 340L270 370L275 400L230 435M90 520L90 560L190 550L205 580L208 635L145 690L135 740L160 820L205 880L225 960L270 1000L330 1020L345 1005L380 1028L405 1010L470 1070L515 1110M525 1060L515 1100L490 1130M350 1240L315 1265L315 1290L340 1330L335 1360L350 1430L410 1490V1520L385 1560L415 1590L360 1595V1700L420 1730L455 1755M420 2010L450 2040V2115" />
      </g>
      <g stroke="#c8c9ca" strokeWidth="4">
        {streets.map(([x, y, ...paths], i) => (
          <g key={i} transform={`translate(${x} ${y})`}>
            {paths.map((d, j) => <path key={j} d={d} />)}
          </g>
        ))}
        <path d="M2080 270L2110 210L2160 235L2130 290M2140 200L2180 180L2205 195L2190 235L2140 225M2225 200H2320M2260 140V200M2290 180V250M2225 240L2270 270L2300 240M2070 440L2120 380L2180 420L2230 470L2280 540M2100 480L2200 390L2290 470M2120 520L2240 380L2310 450M2180 420V545M2240 350L2260 410L2310 400L2270 470L2130 540M2200 370L2290 430L2300 500M2140 500L2230 400L2250 350M2370 690H2455M2370 690L2360 740L2330 800M2400 690L2420 730L2440 800M2275 720L2280 755H2340M2035 790H2080M2210 770L2230 800" />
        <path d="M140 1080Q145 1170 190 1190L270 1220L295 1290L330 1420L365 1520L330 1620Q325 1690 360 1730M160 1110L180 1170M180 1170L300 1120M1000 1500L1070 1510L1150 1515M1150 1470L1190 1500L1240 1490M2640 1850Q2620 1890 2650 1900L2700 1850L2720 1930L2650 1950L2700 2020L2750 1960L2700 1890M2660 2000L2730 2050L2740 1990" />
      </g>
      <g stroke="#ddeed5" strokeWidth="5">
        <path d="M145 945L152 890L215 890L225 915M150 920L145 945M320 1270L335 1260L360 1270L365 1300L330 1310ZM410 1790L430 1775V1800L415 1830Z" />
      </g>
      <g stroke="#a9cda9" strokeWidth="4">
        <path d="M2120 0V60L2160 75L2205 65L2215 0M2070 20L2085 0M2690 1250L2680 1190L2730 1060M2610 1150L2625 1210M2640 1135V1190H2610M1165 1345H1195L1225 1380L1260 1400L1310 1410V1430L1240 1415L1190 1370ZM1890 1530H1925L1915 1580L1940 1570M2120 1585L2135 1620L2170 1590M1365 1000V1060L1410 1070V1000ZM1420 1020L1460 1010L1470 1070H1430ZM1380 1090L1430 1080" />
      </g>
      {hatches.map(([d, kind], i) => <path key={i} d={d} fill={`url(#${kind})`} />)}
      <path d="M812 615V860M858 615V855M914 615V850M812 690H960M812 790H960M970 620V850M1010 620V700M940 1680V1870M990 1680V1870M1040 1680V1870M1075 1700H1100V1740H1075ZM2320 128L2570 120M2328 188L2570 182M2640 225H2830M2530 815L2535 1060M310 1440L305 1560M640 1700V1820M705 1700V1870M875 1680V1870" stroke="#e7e4da" strokeWidth="4" strokeDasharray="10 5" />

      {([["#c6c49c", 20], ["#fffee2", 14]] as [string, number][]).map(([c, w]) => (
        <g key={c} stroke={c} strokeWidth={w}>
          {creamRoads.map((d) => <path key={d} d={d} />)}
        </g>
      ))}
      {([["#c6c49c", 14], ["#fffee2", 9]] as [string, number][]).map(([c, w]) => (
        <g key={c} stroke={c} strokeWidth={w}>
          {creamRamps.map((d) => <path key={d} d={d} />)}
        </g>
      ))}
      {([["#dcc069", 10], ["#fff6ad", 4]] as [string, number][]).map(([c, w]) => (
        <g key={c} stroke={c} strokeWidth={w}>
          {yellowRamps.map((d) => <path key={d} d={d} />)}
        </g>
      ))}
      {([["#e0c28c", 22], ["#fff99f", 17]] as [string, number][]).map(([c, w]) => (
        <g key={c} stroke={c} strokeWidth={w}>
          {yellowRoads.map((d) => <path key={d} d={d} />)}
        </g>
      ))}
      <path d={rail} stroke="#959595" strokeWidth="8" />
      <path d={rail} stroke="#f4f4f4" strokeWidth="4" strokeDasharray="24 24" />
      <path d={slipRoads} stroke="#c8588b" strokeWidth="14" />
      <path d={slipRoads} stroke="#ef8db1" strokeWidth="8" />
      {highways.map(([d, w]) => <path key={d} d={d} stroke="#c65f8e" strokeWidth={w} />)}
      {highways.map(([d, w]) => <path key={d} d={d} stroke="#f08eb2" strokeWidth={w - 5} />)}
      {highways.map(([d, w]) => <path key={d} d={d} stroke="#c9588c" strokeWidth={w / 3} />)}
      {highways.map(([d, w]) => <path key={d} d={d} stroke="#f08eb2" strokeWidth={w / 3 - 6} />)}

      <rect x="742" y="2102" width="120" height="30" rx="6" fill="#fffbe9" stroke="#45423e" strokeWidth="5" />
      {flags.map(([x, y]) => (
        <g key={x} transform={`translate(${x} ${y})`} stroke="#d5f3d4" strokeWidth="10">
          <path d="M-24 42H25M-14 38V0L6 10L-14 22" />
          <path d="M-25 42H25M-14 38V0" stroke="#57997f" strokeWidth="4" />
          <path d="M-16 0L6 10L-16 20Z" fill="#57997f" stroke="none" />
          <circle cx="17" cy="26" r="8" fill="#57997f" stroke="none" />
        </g>
      ))}
      <path d="M1738 1232H1784V1262H1738Z" fill="#8496a3" stroke="#8496a3" strokeWidth="4" strokeLinejoin="round" />
      <path d="M1750 1234V1226Q1750 1216 1761 1216Q1772 1216 1772 1226V1234" stroke="#8496a3" strokeWidth="5" />
      <rect x="2024" y="1898" width="46" height="46" fill="#b48fa6" stroke="#fff" strokeWidth="3" />
      <path d="M2047 1904V1938M2030 1921H2064" stroke="#fff" strokeWidth="14" />
      <path d="M65 708L72 718H100L108 708M70 726H104M66 750L76 732H98L108 750M87 710V730" stroke="#fff" strokeWidth="14" />
      <path d="M64 708H80V717H94V708H110M66 726H108M66 752V740L76 734H98L108 740V752M74 717V726M100 717V726" stroke="#8c9492" strokeWidth="6" />
    </g>

    {labels.map((l) => (
      <MapText
        key={`${l.t}${l.x}${l.y}`}
        $anchor={l.anchor ?? "middle"}
        x={l.x}
        y={l.y}
        fontSize={l.size ?? 16}
        fill={tones[l.tone][0]}
        stroke={tones[l.tone][1]}
        transform={l.turn ? `rotate(${l.turn} ${l.x} ${l.y})` : undefined}
      >
        {l.t}
      </MapText>
    ))}

    <g transform="translate(496 245)">
      <path d="M4 1Q13 4 22.500 1Q32 4 41 1Q46 8 44 16Q41 26 22.500 31Q4 26 1 16Q-1 8 4 1Z" fill="#5990c9" stroke="#4b83be" strokeWidth="1" />
      <path d="M5 3Q13 5 22.500 3Q32 5 40 3Q44 9 42 16Q39 24 22.500 29Q6 24 3 16Q1 9 5 3Z" fill="none" stroke="#fff" />
      <path d="M7 3Q14 5 22.500 3Q31 5 38 3L40 7H5Z" fill="#d85f5c" />
    </g>
    <MapText $anchor="middle" x={518} y={265} fontSize={13} fontWeight={600} fill="#fff">275</MapText>

    <g transform="translate(61 647) rotate(-43)">
      <path d="M-36 -10V13H-29L-24 21L-17 13H34V-10H-6V-18H-28V-10Z" fill="#dcecd9" />
      <path d="M-33 10H-18L-26 18Z" fill="#74a97b" />
      <path d="M-33 -5L-25 6" stroke="#74a97b" strokeWidth="5" />
    </g>
    <MapText $anchor="middle" x={64} y={655} fontSize={27} fontWeight={800} fill="#74a97b" stroke="#dcecd9" transform="rotate(-43 61 647)">here</MapText>

    <rect x="464" y="311" width="32" height="32" fill="#1b458e" stroke="#fff" />
    <text x="480" y="336" textAnchor="middle" fontFamily={arial} fontSize="24" fontWeight="700" fill="#fff">B</text>
  </MapDrawing>
);

const Mug = () => (
  <MugSvg viewBox="0 0 41 42" aria-hidden="true">
    <path
      fill="#fff"
      fillRule="evenodd"
      d="M2 0H27Q29 0 29 2V6H35Q41 6 41 12V25Q41 29 38 31L29 36V40Q29 42 27 42H2Q0 42 0 40V2Q0 0 2 0ZM29 12V29L34 26Q35 25 35 24V13Q35 12 34 12ZM9 11Q9 10 10 10Q12 10 12 11V31Q12 32 10 32Q9 32 9 31ZM17 11Q17 10 18 10Q20 10 20 11V31Q20 32 18 32Q17 32 17 31Z"
    />
  </MugSvg>
);

const Pin = () => (
  <PinSvg viewBox="0 0 18 24" aria-hidden="true">
    <path fill="#fff" d="M9 0Q18 0 18 9Q18 12 16 15L10 23Q9 24 8 23L2 15Q0 12 0 9Q0 0 9 0Z" />
  </PinSvg>
);

export default function App() {
  return (
    <>
      <GlobalStyle />
      <Shell>
        <Page>
          <Top>
            <Panel onSubmit={(e) => e.preventDefault()}>
              <PanelTitle>
                Search for Breweries <Mug />
              </PanelTitle>
              <Button type="button" $size="small">
                <Pin />
                Locate Me
              </Button>
              <Label htmlFor="radius">Search radius:</Label>
              <Select id="radius" defaultValue="1">
                <option value="1">One Mile</option>
                <option value="5">Five Miles</option>
                <option value="10">Ten Miles</option>
              </Select>
              <Button type="submit" $size="medium">Search</Button>
            </Panel>
            <MapBox>
              <MapPicture />
              <Credits>
                <CreditLink href="#terms">Terms of use</CreditLink>
                <span>© 1987–2020 HERE</span>
              </Credits>
            </MapBox>
          </Top>
          <Results>
            <ResultsTitle>Closest Breweries</ResultsTitle>
            <article>
              <BreweryHead>
                <BreweryName $width={834}>American Harvest Brewpub At Schoolcraft College</BreweryName>
                <Button type="button" $size="large" $focused>Add to Map</Button>
              </BreweryHead>
              <Line>Type: brewpub</Line>
              <Address>
                18600 Haggerty Rd<br />
                Livonia, Michigan 48152<br />
                Phone: (734) 462-7659
              </Address>
              <Line>
                Website:<SiteLink href="http://www.schoolcraft.edu">www.schoolcraft.edu</SiteLink>
              </Line>
            </article>
            <article>
              <BreweryHead>
                <BreweryName $width={684} />
                <Button type="button" $size="large">Add to Map</Button>
              </BreweryHead>
            </article>
          </Results>
        </Page>
        <Scrollbar aria-hidden="true">
          <Arrow viewBox="0 0 25 25"><path d="M7 16L12.500 10L18 16Z" fill="#505050" /></Arrow>
          <Gap $grow={101} />
          <Thumb />
          <Gap $grow={198} />
          <Arrow viewBox="0 0 25 25"><path d="M7 9L12.500 15L18 9Z" fill="#505050" /></Arrow>
        </Scrollbar>
      </Shell>
    </>
  );
}
